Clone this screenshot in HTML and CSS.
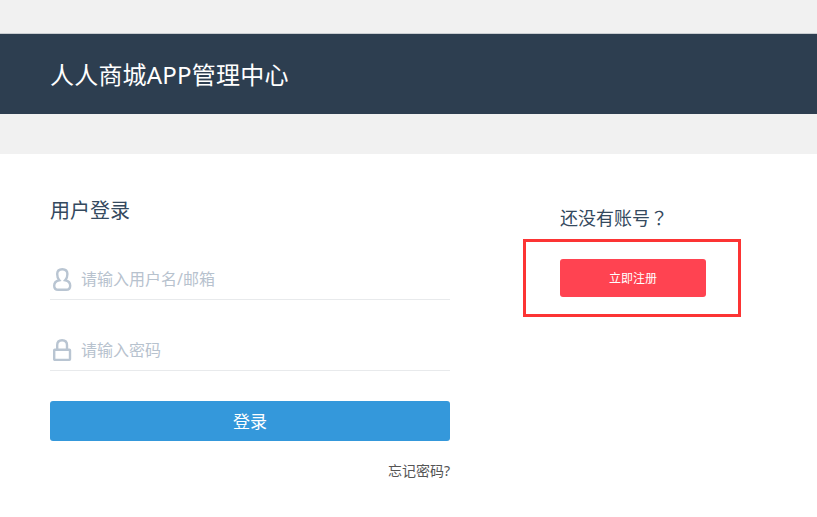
FILE: index.html
```html
<!DOCTYPE html>
<html lang="zh-CN">
<head>
<meta charset="utf-8">
<title>人人商城APP管理中心</title>
<link rel="stylesheet" href="styles.css">
</head>
<body>
<header class="header"><h1 class="brand">人人商城APP管理中心</h1></header>
<main class="content">
  <form class="login">
    <h2 class="login-title">用户登录</h2>
    <label class="field">
      <svg class="icon" viewBox="0 0 24 28" fill="none" stroke="currentColor" stroke-width="2.4"><path d="M12.300 4.200C9.200 4.200 7.200 6 7.200 9C7.200 11.700 7.800 13.800 9.200 15.200C6.300 15.800 4.200 18 4.200 20.800C4.200 23.600 5.600 24.800 8.200 24.800H16.200C18.800 24.800 20.200 23.600 20.200 20.800C20.200 18 18.200 15.800 15.300 15.200C16.700 13.800 17.400 11.700 17.400 9C17.400 6 15.400 4.200 12.300 4.200Z"/></svg>
      <input class="input" type="text" placeholder="请输入用户名/邮箱">
    </label>
    <label class="field">
      <svg class="icon" viewBox="0 0 24 28" fill="none" stroke="currentColor" stroke-width="2.4"><rect x="4.200" y="13.700" width="15.800" height="10.200" rx="0.600"/><path d="M7.200 13.500V9C7.200 6 9 4.200 12.100 4.200S17 6 17 9V13.500"/></svg>
      <input class="input" type="password" placeholder="请输入密码">
    </label>
    <button class="submit" type="button">登录</button>
    <a class="forgot">忘记密码?</a>
  </form>
  <section class="register">
    <h3 class="register-title">还没有账号<span class="mark" lang="zh-TW">？</span></h3>
    <div class="highlight"><button class="register-button" type="button">立即注册</button></div>
  </section>
</main>
</body>
</html>
```
FILE: styles.css
```css
* {
  box-sizing: border-box;
}

body {
  margin: 0;
  padding-top: 33px;
  background: #f1f1f1;
  font-family: "Noto Sans", "Noto Sans CJK SC", sans-serif;
}

h1, h2, h3 {
  margin: 0;
  font-weight: 400;
}

.header {
  display: flex;
  align-items: center;
  height: 81px;
  padding: 1px 50px 0;
  border-top: 1px solid #c9cdd1;
  background: #2d3e50;
}

.brand {
  color: #fff;
  font-size: 24px;
  line-height: 36px;
  letter-spacing: 0.2px;
}

.content {
  display: flex;
  height: 363px;
  margin-top: 40px;
  padding-left: 50px;
  background: #fff;
}

.login {
  display: flex;
  flex-direction: column;
  width: 400px;
  padding-top: 42px;
}

.login-title {
  height: 63px;
  color: #34495e;
  font-size: 20px;
  line-height: 30px;
}

.field {
  display: flex;
  align-items: center;
  gap: 7px;
  height: 41px;
  margin-bottom: 30px;
  border-bottom: 1px solid #e8eaec;
}

.icon {
  width: 24px;
  height: 28px;
  color: #b9c5d2;
}

.input {
  flex: 1;
  min-width: 0;
  height: 36px;
  padding: 0;
  border: 0;
  outline: 0;
  background: none;
  font: 16px "Noto Sans", "Noto Sans CJK SC", sans-serif;
}

.input::placeholder {
  color: #b7c2ce;
  opacity: 1;
}

.submit,
.register-button {
  padding: 0;
  border: 0;
  border-radius: 3px;
  color: #fff;
  font-family: inherit;
}

.submit {
  height: 40px;
  padding-bottom: 2px;
  background: #3498db;
  font-size: 17px;
}

.forgot {
  align-self: flex-end;
  margin-top: 19px;
  color: #555;
  font-size: 14px;
  line-height: 22px;
}

.register {
  width: 218px;
  margin-left: 73px;
  padding-top: 50px;
}

.register-title {
  height: 35px;
  padding-left: 37px;
  color: #34495e;
  font-size: 18px;
  line-height: 27px;
}

.mark {
  font-family: "Noto Sans CJK TC", sans-serif;
}

.highlight {
  height: 78px;
  padding: 17px 0 0 34px;
  border: 3px solid #fc3434;
}

.register-button {
  display: block;
  width: 146px;
  height: 38px;
  padding-bottom: 1px;
  background: #ff4351;
  font-size: 12px;
}
```
